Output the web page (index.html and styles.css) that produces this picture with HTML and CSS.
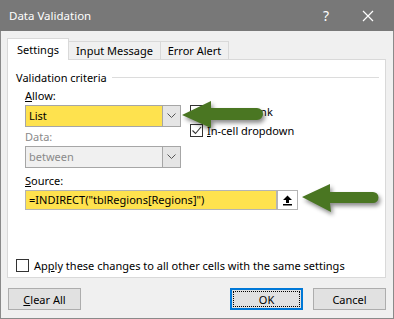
FILE: index.html
```html
<!DOCTYPE html>
<html lang="en">
<head>
  <meta charset="UTF-8" />
  <link rel="stylesheet" href="styles.css">
</head>
<body>
  <div class="dialog">
    <div class="titlebar">
      <span class="title">Data Validation</span>
      <span class="help">?</span>
      <svg class="close" width="12" height="12" viewBox="0 0 12 12"><path d="M1 1 L11 11 M11 1 L1 11" stroke="#fff" stroke-width="1.2"/></svg>
    </div>

    <div class="tabs">
      <div class="tab active">Settings</div>
      <div class="tab">Input Message</div>
      <div class="tab">Error Alert</div>
    </div>

    <div class="panel">
      <div class="legend">
        <span>Validation criteria</span>
        <div class="legend-line"></div>
      </div>

      <div class="criteria">
        <div class="fields">
          <div class="label"><u>A</u>llow:</div>
          <div class="combo yellow">
            <span class="combo-text">List</span>
            <span class="combo-btn"><svg width="9" height="6" viewBox="0 0 9 6"><path d="M0.5 0.5 L4.5 4.5 L8.5 0.5" fill="none" stroke="#555" stroke-width="1"/></svg></span>
          </div>
          <div class="label disabled">Data:</div>
          <div class="combo disabled">
            <span class="combo-text">between</span>
            <span class="combo-btn"><svg width="9" height="6" viewBox="0 0 9 6"><path d="M0.5 0.5 L4.5 4.5 L8.5 0.5" fill="none" stroke="#555" stroke-width="1"/></svg></span>
          </div>
        </div>
        <div class="checks">
          <label class="check"><span class="box"></span><span>Ignore <u>b</u>lank</span></label>
          <label class="check"><span class="box checked"><svg width="11" height="11" viewBox="0 0 11 11"><path d="M1.5 5.5 L4.5 8.5 L10 2" fill="none" stroke="#333" stroke-width="1.1"/></svg></span><span><u>I</u>n-cell dropdown</span></label>
        </div>
      </div>

      <div class="source">
        <div class="label"><u>S</u>ource:</div>
        <div class="source-field">
          <span class="source-text">=INDIRECT("tblRegions[Regions]")</span>
          <span class="source-btn"><svg width="11" height="11" viewBox="0 0 11 11"><path d="M5.5 0.5 L10 5 L7 5 L7 8 L4 8 L4 5 L1 5 Z" fill="#000"/><rect x="1" y="9" width="9" height="1.5" fill="#000"/></svg></span>
        </div>
      </div>

      <label class="check apply"><span class="box"></span><span>Ap<u>p</u>ly these changes to all other cells with the same settings</span></label>
    </div>

    <div class="actions">
      <button class="btn"><u>C</u>lear All</button>
      <div class="right">
        <button class="btn default"><span class="focus">OK</span></button>
        <button class="btn">Cancel</button>
      </div>
    </div>

    <svg class="arrow arrow-allow" width="90" height="40" viewBox="0 0 90 40">
      <path d="M2 15 L31 1 L31 8 L77 8 A6 6 0 0 1 77 20 L31 20 L31 28 Z" fill="#4a7622"/>
    </svg>
    <svg class="arrow arrow-source" width="90" height="40" viewBox="0 0 90 40">
      <path d="M2 15 L30 2 L30 10 L73 10 A5.5 5.5 0 0 1 73 21 L30 21 L31 30 Z" fill="#4a7622"/>
    </svg>
  </div>
</body>
</html>
```
FILE: styles.css
```css
body {
  margin: 0;
  font-family: "Noto Sans", sans-serif;
  font-size: 11px;
  color: #000;
  background: #fff;
}

.dialog {
  position: relative;
  width: 394px;
  height: 319px;
  box-sizing: border-box;
  background: #f0f0f0;
  border: 1px solid #8a8a8a;
  border-top: none;
}

.titlebar {
  display: flex;
  align-items: center;
  height: 31px;
  margin: 0 -1px;
  padding-left: 9px;
  background: #787878;
  color: #fff;
}

.title {
  flex: 1;
  font-size: 11.5px;
}

.help {
  font-size: 14px;
  margin-right: 33px;
}

.close {
  margin-right: 20px;
}

.tabs {
  display: flex;
  align-items: flex-end;
  margin: 7px 0 0 6px;
  height: 21px;
  white-space: nowrap;
}

.tab {
  height: 18px;
  line-height: 17px;
  box-sizing: border-box;
  border: 1px solid #d9d9d9;
  border-bottom: none;
  margin-left: -1px;
  text-align: center;
}

.tab.active {
  width: 62px;
  height: 22px;
  line-height: 21px;
  margin-left: 0;
  margin-bottom: -1px;
  background: #fff;
  position: relative;
  z-index: 1;
}

.tab:nth-child(2) {
  width: 93px;
}

.tab:nth-child(3) {
  width: 69px;
}

.panel {
  margin: 0 7px 0 6px;
  height: 219px;
  box-sizing: border-box;
  background: #fff;
  border: 1px solid #d9d9d9;
  padding: 9px 6px 0 8px;
  display: flex;
  flex-direction: column;
}

.legend {
  display: flex;
  align-items: center;
  height: 16px;
}

.legend-line {
  flex: 1;
  height: 1px;
  background: #dcdcdc;
  margin-left: 5px;
}

.criteria {
  display: flex;
  margin: 3px 0 0 9px;
}

.fields {
  width: 156px;
}

.label {
  height: 16px;
  line-height: 16px;
  margin-bottom: 1px;
}

.label.disabled,
.combo.disabled {
  color: #8a8a8a;
}

.combo {
  display: flex;
  height: 22px;
  box-sizing: border-box;
  border: 1px solid #a6a6a6;
  margin-bottom: 2px;
  background: #f0f0f0;
}

.combo.yellow {
  background: #fee24e;
}

.combo-text {
  flex: 1;
  line-height: 20px;
  padding-left: 3px;
}

.combo-btn {
  width: 17px;
  display: flex;
  align-items: center;
  justify-content: center;
  background: #e5e5e5;
  border-left: 1px solid #a6a6a6;
}

.checks {
  margin: 17px 0 0 9px;
  display: flex;
  flex-direction: column;
  gap: 6px;
}

.check {
  display: flex;
  align-items: center;
  gap: 4px;
  height: 13px;
}

.box {
  width: 13px;
  height: 13px;
  box-sizing: border-box;
  border: 1px solid #333;
  background: #fff;
  display: flex;
  align-items: center;
  justify-content: center;
}

.source {
  margin: 3px 0 0 9px;
}

.source-field {
  display: flex;
  width: 273px;
  height: 20px;
  box-sizing: border-box;
  border: 1px solid #b4b4b4;
  background: #fee24e;
}

.source-text {
  flex: 1;
  line-height: 18px;
  padding-left: 3px;
}

.source-btn {
  width: 19px;
  display: flex;
  align-items: center;
  justify-content: center;
  background: #fff;
  border-left: 2px solid #b4b4b4;
}

.apply {
  margin-top: 49px;
  gap: 5px;
}

.actions {
  display: flex;
  justify-content: space-between;
  margin: 10px 7px 0 7px;
}

.right {
  display: flex;
  gap: 10px;
}

.btn {
  width: 73px;
  height: 22px;
  font: inherit;
  color: #000;
  background: #e1e1e1;
  border: 1px solid #adadad;
  padding: 0;
}

.btn.default {
  border: 2px solid #0078d7;
  padding: 1px;
}

.focus {
  display: block;
  height: 100%;
  box-sizing: border-box;
  border: 1px dotted #000;
  line-height: 15px;
}

.arrow {
  position: absolute;
  filter: drop-shadow(2px 3px 2px rgba(0, 0, 0, 0.45));
}

.arrow-allow {
  left: 179px;
  top: 100px;
}

.arrow-source {
  left: 299px;
  top: 182px;
}
```
